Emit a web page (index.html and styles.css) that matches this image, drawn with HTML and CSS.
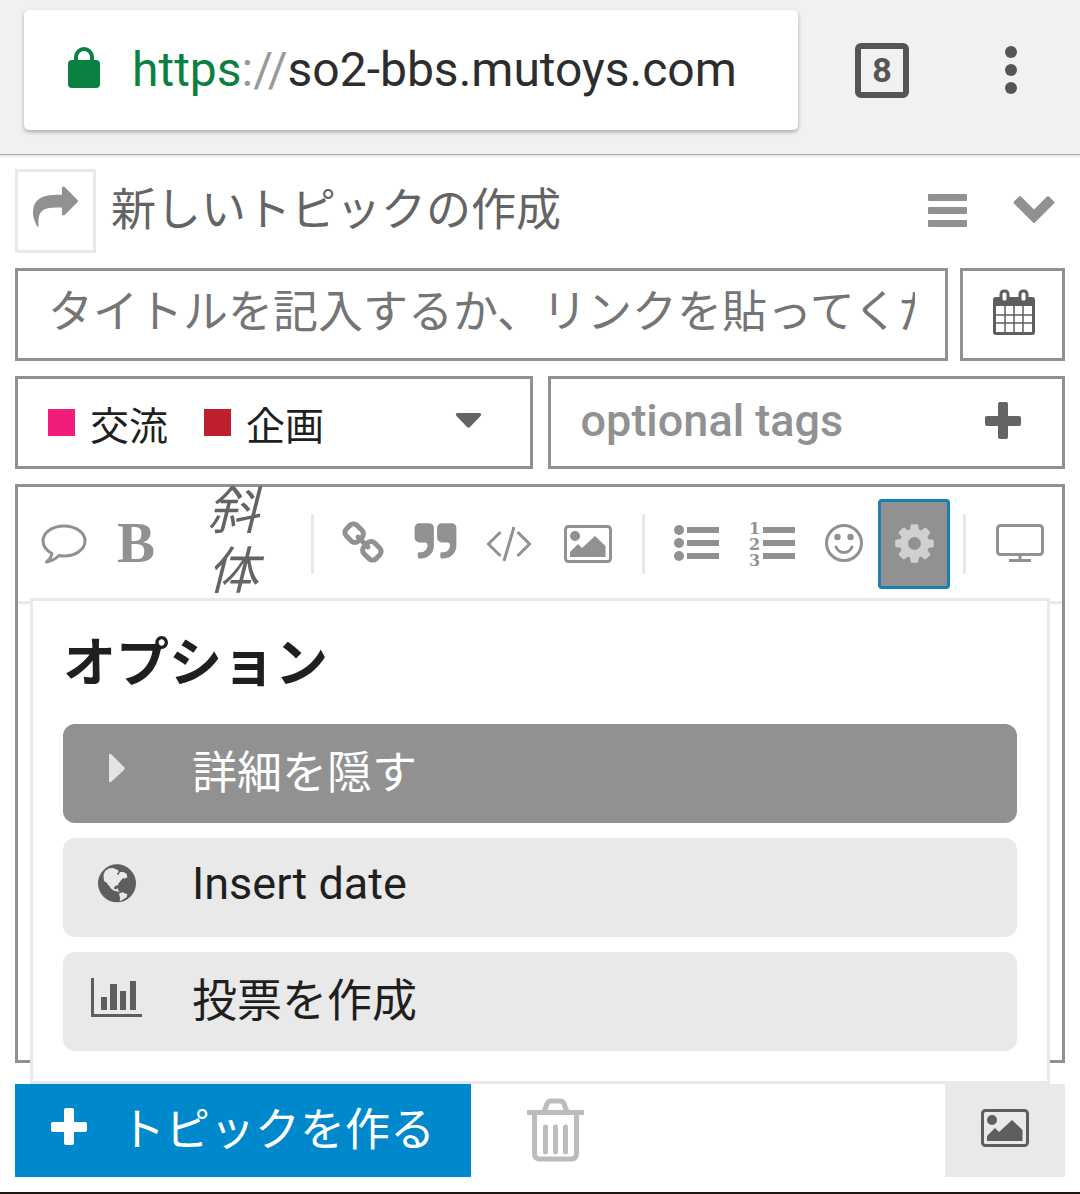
FILE: index.html
```html
<!DOCTYPE html>
<html lang="ja">
<head>
    <meta charset="UTF-8">
    <meta name="viewport" content="width=device-width, initial-scale=1.0">
    <title>新しいトピックの作成</title>
    <link rel="stylesheet" href="styles.css">
</head>
<body>
    <header class="browser-bar">
        <div class="address">
            <svg class="lock" width="32" height="44" viewBox="0 0 32 44" aria-hidden="true">
                <path d="M8 17v-5a8 8 0 0 1 16 0v5" fill="none" stroke="#0b8043" stroke-width="4"/>
                <rect y="15" width="32" height="28" rx="4" fill="#0b8043"/>
            </svg>
            <span class="url"><span class="scheme">https</span><span class="slashes">://</span>so2-bbs.mutoys.com</span>
        </div>
        <button class="tab-count" type="button" aria-label="タブ">8</button>
        <button class="more" type="button" aria-label="メニュー">
            <svg width="14" height="50" viewBox="0 0 14 50" fill="#555">
                <circle cx="7" cy="7" r="6"/><circle cx="7" cy="25" r="6"/><circle cx="7" cy="43" r="6"/>
            </svg>
        </button>
    </header>

    <main class="composer">
        <div class="title-bar">
            <button class="share" type="button" aria-label="共有">
                <svg width="45" height="45" viewBox="0 0 1792 1792" fill="#919191">
                    <path d="M1792 640q0 26-19 45l-512 512q-19 19-45 19t-45-19-19-45v-256h-224q-98 0-175.5 6t-154 21.5-133 42.5-105.5 69.5-80 101-48.5 138.5-17.500 181q0 55 5 123 0 6 2.500 23.500t2.500 26.500q0 15-8.500 25t-23.500 10q-16 0-28-17-7-9-13-22t-13.500-30-10.500-24q-127-285-127-451 0-199 53-333 162-403 875-403h224v-256q0-26 19-45t45-19 45 19l512 512q19 19 19 45z"/>
                </svg>
            </button>
            <h1>新しいトピックの作成</h1>
            <button class="plain" type="button" aria-label="ツールバー">
                <svg width="40" height="34" viewBox="0 0 40 34" fill="#919191">
                    <rect width="39" height="7" rx="1"/><rect y="13" width="39" height="7" rx="1"/><rect y="26" width="39" height="7" rx="1"/>
                </svg>
            </button>
            <button class="plain" type="button" aria-label="閉じる">
                <svg width="42" height="38" viewBox="0 0 42 38" fill="#919191">
                    <path d="M1 9.500 6 4.500q1-1 2 0L21 17.500 34 4.500q1-1 2 0l5 5q1 1 0 2L22 30.500q-1 1-2 0L1 11.500q-1-1 0-2z"/>
                </svg>
            </button>
        </div>

        <div class="row">
            <input class="box title-input" type="text" aria-label="タイトル" placeholder="タイトルを記入するか、リンクを貼ってください。">
            <button class="box calendar" type="button" aria-label="日付">
                <svg width="44" height="48" viewBox="0 0 44 48">
                    <rect x="1" y="8" width="42" height="38" rx="3" fill="#5e5e5e"/>
                    <path d="M4 17h36v26H4z" fill="#fff"/>
                    <path d="M13 17v26M22 17v26M31 17v26M4 26h36M4 34h36" stroke="#5e5e5e" stroke-width="1.500"/>
                    <rect x="9" y="2" width="7" height="11" rx="3" fill="#fff" stroke="#5e5e5e" stroke-width="3"/>
                    <rect x="28" y="2" width="7" height="11" rx="3" fill="#fff" stroke="#5e5e5e" stroke-width="3"/>
                </svg>
            </button>
        </div>

        <div class="row halves">
            <button class="box category" type="button" aria-haspopup="listbox">
                <span class="swatch pink"></span><span class="name">交流</span>
                <span class="swatch red"></span><span class="name">企画</span>
                <svg class="caret" width="27" height="20" viewBox="0 0 27 20" fill="#646464">
                    <path d="M2 0h23q2 1 .5 3L15 14q-1.500 1.500-3 0L1.500 3Q0 1 2 0z"/>
                </svg>
            </button>
            <div class="box tags">
                <input type="text" aria-label="タグ" placeholder="optional tags">
                <button class="plain" type="button" aria-label="タグを追加">
                    <svg width="36" height="37" viewBox="0 0 36 37" fill="#646464">
                        <rect x="13" width="10" height="37" rx="2"/><rect y="14" width="36" height="10" rx="2"/>
                    </svg>
                </button>
            </div>
        </div>

        <section class="editor">
            <div class="toolbar">
                <button class="tool" type="button" aria-label="引用返信">
                    <svg width="46" height="40" viewBox="0 0 46 40" fill="none" stroke="#919191" stroke-width="3" stroke-linejoin="round">
                        <path d="M23 2C11.500 2 2 8.500 2 17c0 5 3.500 9.500 9 12.500-.5 3-2.500 6-5.500 8.500 5.500-.8 9.500-3.500 12.500-6.500 1.500.3 3.500.5 5 .5 11.500 0 21-6.500 21-15S34.500 2 23 2z"/>
                    </svg>
                </button>
                <button class="tool bold" type="button">B</button>
                <button class="tool italic" type="button">斜体</button>
                <span class="divider"></span>
                <button class="tool" type="button" aria-label="リンク">
                    <svg width="42" height="46" viewBox="0 0 42 46" fill="none" stroke="#919191" stroke-width="5">
                        <g transform="rotate(45 21 21)">
                            <rect x="0" y="13.500" width="17" height="15" rx="5"/>
                            <rect x="25" y="13.500" width="17" height="15" rx="5"/>
                            <path d="M14 21h14" stroke-linecap="round"/>
                        </g>
                    </svg>
                </button>
                <button class="tool" type="button" aria-label="引用">
                    <svg width="45" height="49" viewBox="0 0 1792 1951" fill="#919191">
                        <path id="quote" d="M832 320v704q0 104-40.500 198.500t-109.500 163.500-163.500 109.500-198.500 40.500h-64q-26 0-45-19t-19-45v-128q0-26 19-45t45-19h64q106 0 181-75t75-181v-32q0-40-28-68t-68-28h-224q-80 0-136-56t-56-136v-384q0-80 56-136t136-56h384q80 0 136 56t56 136z"/>
                        <use href="#quote" x="896"/>
                    </svg>
                </button>
                <button class="tool wide" type="button" aria-label="コード">
                    <svg width="46" height="36" viewBox="0 0 46 36" fill="none" stroke="#919191" stroke-width="3">
                        <path d="M14.500 6 2.500 18l12 12M31.500 6l12 12-12 12M28 1 18 35"/>
                    </svg>
                </button>
                <button class="tool wider" type="button" aria-label="画像">
                    <svg width="48" height="38" viewBox="0 0 48 38">
                        <rect x="1.500" y="1.500" width="45" height="35" rx="3" fill="none" stroke="#919191" stroke-width="3"/>
                        <path d="M6 32v-5l8-8 4 4 13-12 10.500 10v11z" fill="#919191"/><circle cx="11" cy="11" r="5" fill="#919191"/>
                    </svg>
                </button>
                <span class="divider"></span>
                <button class="tool wide" type="button" aria-label="箇条書き">
                    <svg width="45" height="38" viewBox="0 0 45 38" fill="#919191">
                        <circle cx="5" cy="5" r="5"/><circle cx="5" cy="18" r="5"/><circle cx="5" cy="31" r="5"/>
                        <path d="M13 2h32v6H13zM13 15h32v6H13zM13 28h32v6H13z"/>
                    </svg>
                </button>
                <button class="tool wide" type="button" aria-label="番号リスト">
                    <svg width="45" height="50" viewBox="0 0 45 50" fill="#919191">
                        <g class="digits"><text x="-1" y="15">1</text><text x="-1" y="31">2</text><text x="-1" y="47">3</text></g>
                        <path d="M13 8h32v6H13zM13 21h32v6H13zM13 34h32v6H13z"/>
                    </svg>
                </button>
                <button class="tool narrow" type="button" aria-label="絵文字">
                    <svg width="38" height="40" viewBox="0 0 38 40" fill="#919191">
                        <circle cx="19" cy="19" r="17.500" fill="none" stroke="#919191" stroke-width="3"/>
                        <circle cx="12.500" cy="13" r="3.200"/><circle cx="25.500" cy="13" r="3.200"/>
                        <path d="M11 23q2.500 5.500 8 5.500t8-5.500" fill="none" stroke="#919191" stroke-width="3" stroke-linecap="round"/>
                    </svg>
                </button>
                <button class="tool active" type="button" aria-label="オプション" aria-expanded="true">
                    <svg width="45" height="47" viewBox="0 0 1792 1872" fill="#d0d0d0">
                        <path d="M1152 896q0-106-75-181t-181-75-181 75-75 181 75 181 181 75 181-75 75-181zm512-109v222q0 12-8 23t-20 13l-185 28q-19 54-39 91 35 50 107 138 10 12 10 25t-9 23q-27 37-99 108t-94 71q-12 0-26-9l-138-108q-44 23-91 38-16 136-29 186-7 28-36 28h-222q-14 0-24.500-8.500t-11.500-21.500l-28-184q-49-16-90-37l-141 107q-10 9-25 9-14 0-25-11-126-114-165-168-7-10-7-23 0-12 8-23 15-21 51-66.500t54-70.500q-27-50-41-99l-183-27q-13-2-21-12.500t-8-23.500v-222q0-12 8-23t19-13l186-28q14-46 39-92-40-57-107-138-10-12-10-24 0-10 9-23 26-36 98.500-107.500t94.500-71.500q13 0 26 10l138 107q44-23 91-38 16-136 29-186 7-28 36-28h222q14 0 24.500 8.500t11.500 21.500l28 184q49 16 90 37l142-107q9-9 24-9 13 0 25 10 129 119 165 170 7 8 7 22 0 12-8 23-15 21-51 66.500t-54 70.500q26 50 41 98l183 28q13 2 21 12.500t8 23.500z"/>
                    </svg>
                </button>
                <span class="divider"></span>
                <button class="tool wider" type="button" aria-label="プレビュー">
                    <svg width="48" height="40" viewBox="0 0 48 40" fill="none" stroke="#919191" stroke-width="3">
                        <rect x="1.500" y="1.500" width="45" height="29" rx="3"/>
                        <path d="M24 31v5M13 36.500h22"/>
                    </svg>
                </button>

                <div class="options">
                    <h2>オプション</h2>
                    <button class="option selected" type="button">
                        <svg width="54" height="45" viewBox="0 0 54 45" fill="#e4e4e4">
                            <path d="M19 8q0-2 2-1l13 13q1.500 1.500 0 3L21 35q-2 1-2-1z"/>
                        </svg>
                        詳細を隠す
                    </button>
                    <button class="option" type="button">
                        <svg width="54" height="45" viewBox="-24 -10 162 135">
                            <circle cx="57" cy="57" r="57" fill="#5e5e5e"/>
                            <path d="M17 30 22 19l12-7 13-1 4 3 9 3 2 6-6 5 5 4 5-9 11 0 9 6 2 10-8 4-5-2-5 6-8 10-2 6-8 1-4 6 1 4 5 1 6-3 1 7 5 3-5 0-13-3-10-7-6-11-1 5-3-9-9-6-2-9z" fill="#e9e9e9"/>
                            <path d="m64 87 10-3 6 3 8 3-2 9-10 6-8 5-3-2 2-8-3-5z" fill="#e9e9e9"/>
                        </svg>
                        Insert date
                    </button>
                    <button class="option" type="button">
                        <svg width="54" height="45" viewBox="0 0 54 45" fill="#5e5e5e">
                            <path d="M1 3h3v36h48v3H1zM11 22h6v13h-6zM20 9h7v26h-7zM30 16h6v19h-6zM40 6h6v29h-6z"/>
                        </svg>
                        投票を作成
                    </button>
                </div>
            </div>
            <textarea class="text" aria-label="本文"></textarea>
        </section>

        <footer class="actions">
            <button class="create" type="button">
                <svg width="36" height="37" viewBox="0 0 36 37" fill="#fff">
                    <rect x="13" width="10" height="37" rx="2"/><rect y="14" width="36" height="10" rx="2"/>
                </svg>
                トピックを作る
            </button>
            <button class="plain" type="button" aria-label="破棄">
                <svg width="57" height="66" viewBox="0 0 57 66" fill="none" stroke="#bcbcbc" stroke-width="5">
                    <path d="M0 14.500h57M17 14l3-8q1-3 4-3h9q3 0 4 3l3 8M7.500 14v41q0 6 5 6h32q5 0 5-6V14"/>
                    <path d="M18.500 29v25M28.500 29v25M38.500 29v25" stroke-linecap="round"/>
                </svg>
            </button>
            <button class="upload" type="button" aria-label="アップロード">
                <svg width="48" height="38" viewBox="0 0 48 38">
                    <rect x="1.500" y="1.500" width="45" height="35" rx="3" fill="none" stroke="#5e5e5e" stroke-width="3"/>
                    <path d="M6 32v-5l8-8 4 4 13-12 10.500 10v11z" fill="#5e5e5e"/><circle cx="11" cy="11" r="5" fill="#5e5e5e"/>
                </svg>
            </button>
        </footer>
    </main>
</body>
</html>
```
FILE: styles.css
```css
* {
    box-sizing: border-box;
}
body {
    margin: 0;
    min-height: 100vh;
    display: flex;
    flex-direction: column;
    background: #fff;
    color: #1f1f1f;
    border-bottom: 2px solid #1c1712;
    font-family: Roboto, "Noto Sans CJK JP", sans-serif;
    font-size: 45px;
}
button, input, textarea {
    margin: 0;
    padding: 0;
    border: none;
    border-radius: 0;
    background: none;
    color: inherit;
    font: inherit;
    outline: none;
}
button {
    cursor: pointer;
}
svg {
    display: block;
    flex: none;
    overflow: visible;
}

/* browser bar */
.browser-bar {
    display: flex;
    align-items: center;
    padding: 10px 62px 24px 24px;
    background: #f1f1f1;
    border-bottom: 1px solid #b0b0b0;
    box-shadow: 0 1px 3px rgba(0,0,0,0.15);
}
.address {
    display: flex;
    align-items: center;
    flex: 1;
    height: 120px;
    padding: 0 0 2px 44px;
    background: #fff;
    border-radius: 5px;
    box-shadow: 0 2px 4px rgba(0,0,0,0.3);
}
.lock {
    margin: 0 32px 4px 0;
}
.url {
    font-size: 48px;
    color: #2d2d2d;
    white-space: nowrap;
}
.scheme {
    color: #0b8043;
}
.slashes {
    color: #999;
}
.tab-count {
    width: 54px;
    height: 55px;
    margin: 0 95px 0 57px;
    border: 6px solid #555;
    border-radius: 6px;
    color: #555;
    font-size: 34px;
    font-weight: 700;
    line-height: 40px;
}

/* composer */
.composer {
    display: flex;
    flex-direction: column;
    flex: 1;
    gap: 15px;
    padding: 14px 15px 15px;
}
.title-bar {
    display: flex;
    align-items: center;
    padding-right: 10px;
}
.share {
    display: flex;
    justify-content: center;
    width: 81px;
    height: 84px;
    padding-top: 13px;
    border: 3px solid #e9e9e9;
}
h1 {
    flex: 1;
    margin: 0 0 0 15px;
    color: #646464;
    font-size: 45px;
    font-weight: 400;
    line-height: 84px;
}
.title-bar .plain + .plain {
    margin-left: 45px;
}
.row {
    display: flex;
    gap: 12px;
}
.halves {
    gap: 15px;
}
.box {
    height: 93px;
    border: 3px solid #919191;
    background: #fff;
}
::placeholder {
    color: #757575;
    opacity: 1;
}
.title-input {
    flex: 1;
    min-width: 0;
    padding: 0 30px 5px;
}
.calendar {
    display: flex;
    justify-content: center;
    width: 105px;
    padding: 18px 0 0 2px;
}
.category {
    display: flex;
    align-items: center;
    flex: 1 1 50%;
    padding: 0 48px 0 30px;
    font-size: 39px;
    white-space: nowrap;
}
.swatch {
    flex: none;
    width: 27px;
    height: 27px;
    margin-right: 15px;
}
.pink {
    background: #f01d7b;
}
.red {
    background: #be1e2d;
}
.name {
    margin-right: 36px;
}
.caret {
    margin-left: auto;
}
.tags {
    display: flex;
    align-items: center;
    flex: 1 1 50%;
    min-width: 0;
    padding: 0 41px 5px 30px;
}
.tags input {
    flex: 1;
    min-width: 0;
    font-weight: 500;
}
.tags input::placeholder {
    color: #919191;
}

/* editor */
.editor {
    display: flex;
    flex-direction: column;
    flex: 1;
    border: 3px solid #919191;
    margin-bottom: 6px;
}
.toolbar {
    position: relative;
    display: flex;
    align-items: center;
    height: 117px;
    padding-left: 10px;
    border-bottom: 3px solid #e9e9e9;
}
.tool {
    display: flex;
    align-items: center;
    justify-content: center;
    width: 72px;
    height: 90px;
    color: #919191;
}
.narrow {
    width: 68px;
}
.wide {
    width: 76px;
}
.wider {
    width: 82px;
}
.bold {
    padding-bottom: 4px;
    font-family: "Liberation Serif", serif;
    font-size: 57px;
    font-weight: 700;
}
.italic {
    width: 126px;
    padding: 0 38px 4px 34px;
    color: #646464;
    font-size: 51px;
    font-style: italic;
    line-height: 60px;
    word-break: break-all;
}
.digits {
    font-family: "DejaVu Serif", serif;
    font-size: 16px;
    font-weight: 700;
}
.active {
    background: #919191;
    border: 3px solid #1a7fb5;
    border-radius: 4px;
}
.divider {
    width: 3px;
    height: 60px;
    margin: 0 13px;
    background: #e9e9e9;
}
.text {
    flex: 1;
    width: 100%;
    resize: none;
}

/* options menu */
.options {
    position: absolute;
    top: calc(100% - 3px);
    left: 12px;
    right: 12px;
    display: flex;
    flex-direction: column;
    gap: 15px;
    padding: 30px;
    background: #fff;
    border: 3px solid #e9e9e9;
}
.options h2 {
    margin: 0 0 12px;
    font-size: 53px;
    font-weight: 700;
    line-height: 66px;
}
.option {
    display: flex;
    align-items: center;
    gap: 48px;
    height: 99px;
    padding: 0 27px 9px;
    background: #e9e9e9;
    border-radius: 12px;
    text-align: left;
}
.selected {
    background: #919191;
    color: #fff;
}

/* bottom buttons */
.actions {
    display: flex;
    align-items: center;
    height: 93px;
}
.create {
    display: flex;
    align-items: center;
    gap: 33px;
    height: 93px;
    margin-right: 56px;
    padding: 0 36px 9px;
    background: #08c;
    color: #fff;
}
.upload {
    display: flex;
    align-items: center;
    justify-content: center;
    width: 120px;
    height: 93px;
    margin-left: auto;
    padding-bottom: 6px;
    background: #e9e9e9;
}
```
